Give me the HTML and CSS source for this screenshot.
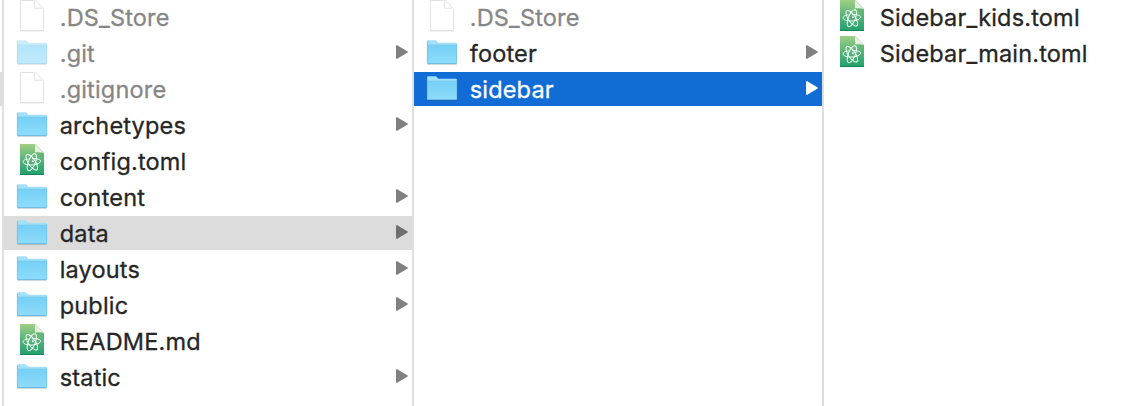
FILE: index.html
```
<!DOCTYPE html>
<html lang="en">
<head>
<meta charset="utf-8">
<title>Files</title>
<link rel="stylesheet" href="styles.css">
</head>
<body>
<svg class="defs" aria-hidden="true">
  <defs>
    <linearGradient id="folder-fill" x1="0" y1="0" x2="0" y2="1"><stop offset="0" stop-color="#76d0f6"/><stop offset="1" stop-color="#8edcfb"/></linearGradient>
    <linearGradient id="atom-fill" x1="0" y1="0" x2="0" y2="1"><stop offset="0" stop-color="#a0cf83"/><stop offset=".5" stop-color="#58b47b"/><stop offset="1" stop-color="#20a06e"/></linearGradient>
    <symbol id="folder" viewBox="0 0 32 34">
      <path d="M1.5 28.3h29" stroke="#000" stroke-opacity=".16" stroke-width="1.2"/>
      <path d="M1 5.5Q1 4.2 2.3 4.2h6.5c1.2 0 1.7.5 2.4 1.4.7.9 1.2 1.2 2.2 1.2h16.3q1.3 0 1.3 1.3V27H1z" fill="#a2dff9"/>
      <path d="M1 9.5h30v17.3q0 1.2-1.2 1.2H2.2Q1 28 1 26.8z" fill="url(#folder-fill)"/>
      <path d="M1.3 9.2h29.4M1.4 5.2v22" stroke="#70c1e6" stroke-width=".8"/>
      <path d="M30.6 8v19" stroke="#70c1e6" stroke-width=".7"/>
      <path d="M1.5 27.6h29" stroke="#65b7dc" stroke-width=".9"/>
    </symbol>
    <symbol id="page" viewBox="0 0 32 34">
      <path d="M4 31h24" stroke="#000" stroke-opacity=".1" stroke-width="1"/>
      <path d="M4.5.5h13.2c2.1 0 3.3 1.1 4.5 2.4l3.4 3.8c1.2 1.3 1.9 2.4 1.9 4v19.8h-23z" fill="#fff" stroke="#e2e2e2"/>
      <path d="M18.3.8v7.4h7.6" fill="none" stroke="#dedede" stroke-width=".9"/>
    </symbol>
    <symbol id="atom" viewBox="0 0 32 34">
      <path d="M4 0h15l9 9v22H4z" fill="url(#atom-fill)"/>
      <path d="M4 30.5h24" stroke="#178459"/>
      <path d="M19 0l9 9v5L19 8.4z" fill="#449e68" opacity=".25"/>
      <path d="M19 0l9 9q-4-1.3-9-.6z" fill="#e4eedf"/>
      <g fill="none" stroke="#f4fff7" stroke-width="1" transform="translate(15.8 18.2)">
        <path d="M-3.2-3.3C-6.5-3-9-1.9-8.7-.1-8.4 1.8-4.5 3-.1 2.8 4.5 2.6 8.9.9 8.7-1.2 8.5-3.1 4.7-3.8.2-3.6"/>
        <ellipse rx="9.1" ry="3.5" transform="rotate(56)"/>
        <ellipse rx="9.1" ry="3.5" transform="rotate(112)"/>
        <circle r="1" cx="1" cy="-.9" fill="#fff" stroke="none"/>
      </g>
    </symbol>
    <symbol id="arrow" viewBox="0 0 12 14"><path d="M0 1Q0-.3 1.2.3L11.3 6.3q1.1.7 0 1.4L1.2 13.7Q0 14.3 0 13z" fill="currentColor"/></symbol>
  </defs>
</svg>
<main class="browser">
  <div class="previous"></div>
  <ul class="column">
    <li class="row hidden"><svg class="icon"><use href="#page"/></svg><span class="name">.DS_Store</span></li>
    <li class="row hidden"><svg class="icon faded"><use href="#folder"/></svg><span class="name">.git</span><svg class="arrow"><use href="#arrow"/></svg></li>
    <li class="row hidden"><svg class="icon"><use href="#page"/></svg><span class="name">.gitignore</span></li>
    <li class="row"><svg class="icon"><use href="#folder"/></svg><span class="name">archetypes</span><svg class="arrow"><use href="#arrow"/></svg></li>
    <li class="row"><svg class="icon"><use href="#atom"/></svg><span class="name">config.toml</span></li>
    <li class="row"><svg class="icon"><use href="#folder"/></svg><span class="name">content</span><svg class="arrow"><use href="#arrow"/></svg></li>
    <li class="row open"><svg class="icon"><use href="#folder"/></svg><span class="name">data</span><svg class="arrow"><use href="#arrow"/></svg></li>
    <li class="row"><svg class="icon"><use href="#folder"/></svg><span class="name">layouts</span><svg class="arrow"><use href="#arrow"/></svg></li>
    <li class="row"><svg class="icon"><use href="#folder"/></svg><span class="name">public</span><svg class="arrow"><use href="#arrow"/></svg></li>
    <li class="row"><svg class="icon"><use href="#atom"/></svg><span class="name">README.md</span></li>
    <li class="row"><svg class="icon"><use href="#folder"/></svg><span class="name">static</span><svg class="arrow"><use href="#arrow"/></svg></li>
  </ul>
  <ul class="column">
    <li class="row hidden"><svg class="icon"><use href="#page"/></svg><span class="name">.DS_Store</span></li>
    <li class="row"><svg class="icon"><use href="#folder"/></svg><span class="name">footer</span><svg class="arrow"><use href="#arrow"/></svg></li>
    <li class="row selected"><svg class="icon"><use href="#folder"/></svg><span class="name">sidebar</span><svg class="arrow"><use href="#arrow"/></svg></li>
  </ul>
  <ul class="column last">
    <li class="row"><svg class="icon"><use href="#atom"/></svg><span class="name">Sidebar_kids.toml</span></li>
    <li class="row"><svg class="icon"><use href="#atom"/></svg><span class="name">Sidebar_main.toml</span></li>
  </ul>
</main>
</body>
</html>
```
FILE: styles.css
```
* { box-sizing: border-box; }
body { margin: 0; background: #fff; overflow: hidden; }
.defs { position: absolute; width: 0; height: 0; }
.browser { display: flex; width: 1142px; height: 406px; font: 23.5px/36px Inter, "Liberation Sans", sans-serif; letter-spacing: .18px; color: #262626; -webkit-text-stroke: .3px currentColor; }
.previous { width: 2px; height: 34px; margin-top: 72px; background: #dcdcdc; }
.column { width: 410px; margin: 0; padding: 0; list-style: none; border-left: 2px solid #dfdfdf; }
.last { width: 320px; }
.row { display: flex; height: 34px; margin-bottom: 2px; padding: 0 4px 0 12px; }
.icon { flex: none; width: 32px; height: 34px; }
.name { flex: 1; margin-left: 11.7px; white-space: nowrap; }
.arrow { flex: none; width: 12px; height: 14px; margin-top: 9px; color: #808080; }
.faded { opacity: .55; }
.hidden { color: #868686; }
.hidden .arrow { color: #808080; }
.open { background: #dcdcdc; }
.open .arrow { color: #6e6e6e; }
.selected { background: #116cd6; color: #fff; }
.selected .arrow { color: #fff; }
```
